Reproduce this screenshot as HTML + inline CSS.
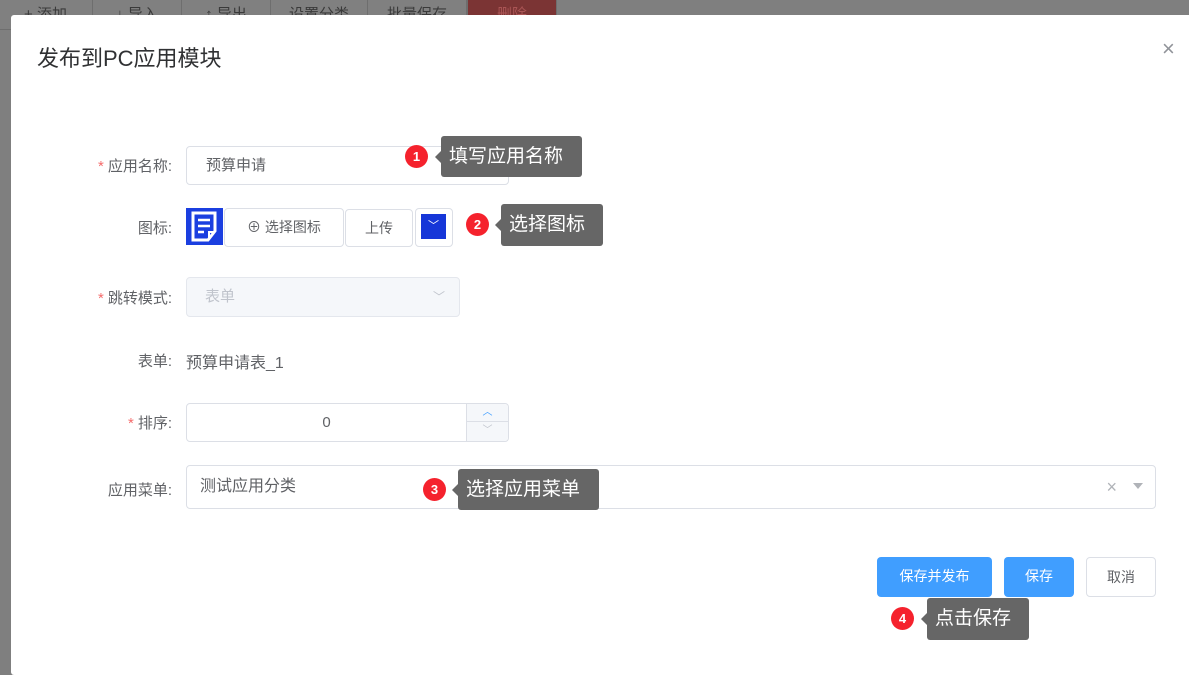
<!DOCTYPE html>
<html><head><meta charset="utf-8"><style>
*{box-sizing:border-box;margin:0;padding:0}
body{width:1189px;height:664px;overflow:hidden;background:#7f7f7f;font-family:"Liberation Sans","Noto Sans CJK SC",sans-serif;position:relative;color:#606266}
.a{position:absolute}
.tb{position:absolute;top:0;height:30px;border:1px solid #6e6e6e;border-top:none;background:#808080;color:#3a3a3a;font-size:15px;line-height:30px;text-align:center;overflow:hidden}
.dlg{position:absolute;left:11px;top:15px;width:1190px;height:660px;background:#fff;border-radius:3px}
.lbl{position:absolute;font-size:15px;color:#606266;text-align:right;width:160px;left:12px}
.lbl i{color:#f56c6c;font-style:normal;margin-right:4px}
.inp{position:absolute;border:1px solid #dcdfe6;border-radius:4px;background:#fff;font-size:15px;color:#606266}
.dot{position:absolute;width:23px;height:23px;border-radius:50%;background:#f5222d;color:#fff;font-size:13px;font-weight:bold;text-align:center;line-height:23px}
.tip{position:absolute;background:#666;color:#fff;font-size:19px;border-radius:3px;padding-left:8px;white-space:nowrap}
.tip:before{content:"";position:absolute;left:-6px;top:50%;margin-top:-6px;border:6px solid transparent;border-left:none;border-right-color:#666}
.btn{position:absolute;border-radius:4px;font-size:14px;text-align:center;line-height:38px;height:40px;top:557px}
</style></head><body>
<div class="tb" style="left:-2px;width:95px">+ 添加</div>
<div class="tb" style="left:92px;width:90px">↓ 导入</div>
<div class="tb" style="left:181px;width:90px">↑ 导出</div>
<div class="tb" style="left:270px;width:98px">设置分类</div>
<div class="tb" style="left:367px;width:100px">批量保存</div>
<div class="tb" style="left:467px;width:90px;background:#7b3434;color:#a55">删除</div>
<div class="dlg"></div>
<div class="a" style="left:37px;top:41px;font-size:22px;color:#303133">发布到PC应用模块</div>
<div class="a" style="left:1162px;top:36px;font-size:22px;color:#909399">×</div>

<div class="lbl" style="top:155px"><i>*</i>应用名称:</div>
<div class="inp" style="left:186px;top:146px;width:323px;height:39px;line-height:37px;padding-left:19px">预算申请</div>
<div class="dot" style="left:405px;top:145px">1</div>
<div class="tip" style="left:441px;top:136px;width:141px;height:41px;line-height:41px">填写应用名称</div>

<div class="lbl" style="top:217px">图标:</div>
<div class="a" style="left:186px;top:208px;width:37px;height:37px;background:#1b3fe0">
<svg width="37" height="37" viewBox="0 0 37 37"><path d="M7 5h22v18l-7 9H7z" fill="none" stroke="#fff" stroke-width="3"/><path d="M12 12h12M12 18h12M12 24h6" stroke="#fff" stroke-width="2.5"/><path d="M29 24l-6 0 0 8" fill="none" stroke="#fff" stroke-width="2"/></svg></div>
<div class="inp" style="left:224px;top:208px;width:120px;height:39px;line-height:37px;text-align:center;font-size:14px">⊕ 选择图标</div>
<div class="inp" style="left:345px;top:209px;width:68px;height:38px;line-height:36px;text-align:center;font-size:14px">上传</div>
<div class="inp" style="left:415px;top:208px;width:38px;height:39px"><div class="a" style="left:5px;top:5px;width:25px;height:25px;background:#1636d8;color:#fff;font-size:11px;text-align:center;line-height:25px">﹀</div></div>
<div class="dot" style="left:466px;top:213px">2</div>
<div class="tip" style="left:501px;top:204px;width:102px;height:42px;line-height:42px">选择图标</div>

<div class="lbl" style="top:287px"><i>*</i>跳转模式:</div>
<div class="inp" style="left:186px;top:277px;width:274px;height:40px;line-height:38px;padding-left:18px;background:#f5f7fa;border-color:#e4e7ed;color:#c0c4cc">表单<span class="a" style="right:14px;top:0;font-size:12px">﹀</span></div>

<div class="lbl" style="top:350px">表单:</div>
<div class="a" style="left:186px;top:349px;font-size:16px;color:#606266">预算申请表_1</div>

<div class="lbl" style="top:412px"><i>*</i>排序:</div>
<div class="inp" style="left:186px;top:403px;width:323px;height:39px;line-height:37px;text-align:center;padding-right:42px">0
<div class="a" style="right:0;top:0;width:42px;height:37px;border-left:1px solid #dcdfe6;background:#f5f7fa;border-radius:0 4px 4px 0"><div style="height:18px;border-bottom:1px solid #dcdfe6;color:#409eff;font-size:10px;line-height:18px">︿</div><div style="color:#c0c4cc;font-size:10px;line-height:18px">﹀</div></div></div>

<div class="lbl" style="top:479px">应用菜单:</div>
<div class="inp" style="left:186px;top:465px;width:970px;height:44px;line-height:42px;padding-left:13px;font-size:16px">测试应用分类<span class="a" style="right:38px;top:0;color:#b0b3b8;font-size:18px">×</span><span class="a" style="right:12px;top:17px;border:5px solid transparent;border-top:6px solid #b0b3b8"></span></div>
<div class="dot" style="left:423px;top:478px">3</div>
<div class="tip" style="left:458px;top:469px;width:141px;height:41px;line-height:41px">选择应用菜单</div>

<div class="btn" style="left:877px;width:115px;background:#409eff;color:#fff">保存并发布</div>
<div class="btn" style="left:1004px;width:70px;background:#409eff;color:#fff">保存</div>
<div class="btn" style="left:1086px;width:70px;border:1px solid #dcdfe6;color:#606266">取消</div>
<div class="dot" style="left:891px;top:607px">4</div>
<div class="tip" style="left:927px;top:598px;width:102px;height:42px;line-height:42px">点击保存</div>
</body></html>
